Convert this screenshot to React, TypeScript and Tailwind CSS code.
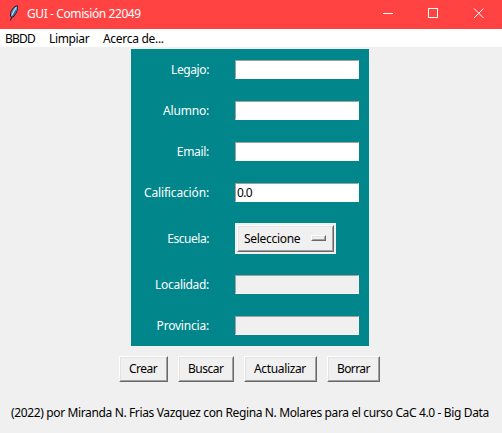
import type { ReactNode } from 'react';

const raised =
  'border border-t-white border-l-white border-r-[#696969] border-b-[#696969]';
const raisedInner =
  'flex h-full w-full items-center border border-t-[#e3e3e3] border-l-[#e3e3e3] border-r-[#a0a0a0] border-b-[#a0a0a0]';

function Row({ label, tracking, children, tall = false }: { label: string; tracking: string; children: ReactNode; tall?: boolean }) {
  return (
    <div className={`flex items-center ${tall ? 'h-[51px]' : 'h-[41px]'}`}>
      <div className="flex w-[104px] justify-end pr-[26px]">
        <span className={`text-white ${tracking}`}>{label}</span>
      </div>
      {children}
    </div>
  );
}

function Entry({ value = '', disabled = false }: { value?: string; disabled?: boolean }) {
  return (
    <div
      className={`flex h-[19px] w-[124px] items-center border border-t-[#a0a0a0] border-l-[#a0a0a0] border-r-white border-b-white pl-px tracking-[-0.7px] ${disabled ? 'bg-[#f0f0f0]' : 'bg-white'}`}
    >
      {value}
    </div>
  );
}

function Button({ label, width, tracking }: { label: string; width: string; tracking: string }) {
  return (
    <button className={`h-[26px] ${width} ${raised}`}>
      <span className={`${raisedInner} pl-2 ${tracking}`}>{label}</span>
    </button>
  );
}

function Feather() {
  return (
    <svg width="16" height="16" viewBox="0 0 16 16">
      <path d="M4 15.5L5 12.5L4 10.5L4.4 7L6 4L9.3 0.8L12 0.6L12 4L10.6 8L8.2 11.5L5.8 13L5 15.5Z" fill="#14141c" />
      <path d="M5 10.8L5.2 7.3L7 4.1L9.7 1.6L11.3 1.3L11.3 4L9.9 7.8L7.8 10.8L5.7 12Z" fill="#5b92c8" />
      <path d="M10.3 2.2L7.6 6.5L5.8 10.6" stroke="#b5dcf5" strokeWidth="1.1" fill="none" />
      <path d="M10 5.5L7.8 9.6L5.4 12.6" stroke="#24344e" strokeWidth=".6" fill="none" />
    </svg>
  );
}

export default function App() {
  return (
    <div className="h-[433px] w-[502px] overflow-hidden whitespace-nowrap bg-[#f0f0f0] font-['Noto_Sans','Open_Sans',sans-serif] text-[12px] leading-4 text-black">
      <header className="flex h-[29px] items-center bg-[#ff4343] text-white">
        <div className="w-[27px] pb-1 pl-1.5">
          <Feather />
        </div>
        <span className="flex-1 pb-px tracking-[-0.4px]">GUI - Comisión 22049</span>
        <svg width="136" height="29" viewBox="366 0 136 29" fill="none" stroke="#fff" shapeRendering="crispEdges">
          <path d="M383 13.5h10M428.5 8.5h9v9h-9z" />
          <path d="M474 8.5l9.5 9.5M483.5 8.5L474 18" shapeRendering="auto" />
        </svg>
      </header>
      <nav className="flex h-[18px] items-center bg-white pl-[5px] pt-0.5">
        <span className="w-11 tracking-[-0.8px]">BBDD</span>
        <span className="w-[54px] tracking-[-0.35px]">Limpiar</span>
        <span className="tracking-[-0.3px]">Acerca de...</span>
      </nav>
      <main className="ml-[131px] mt-0.5 h-[297px] w-[238px] bg-[#00868b]">
        <Row label="Legajo:" tracking="tracking-[-0.4px]"><Entry /></Row>
        <Row label="Alumno:" tracking="tracking-[-0.2px]"><Entry /></Row>
        <Row label="Email:" tracking="tracking-[-0.3px]"><Entry /></Row>
        <Row label="Calificación:" tracking="tracking-[-0.15px]"><Entry value="0.0" /></Row>
        <Row label="Escuela:" tracking="tracking-[-0.45px]" tall>
          <div className="h-[31px] w-[101px] bg-[#f0f0f0] p-0.5">
            <div className={`h-full w-full ${raised}`}>
              <div className={`${raisedInner} justify-between pl-[5px] pr-1.5`}>
                <span className="tracking-[-0.3px]">Seleccione</span>
                <span className={`mb-px block h-1.5 w-[15px] ${raised}`}>
                  <span className={raisedInner} />
                </span>
              </div>
            </div>
          </div>
        </Row>
        <Row label="Localidad:" tracking="tracking-[-0.3px]"><Entry disabled /></Row>
        <Row label="Provincia:" tracking="tracking-[-0.2px]"><Entry disabled /></Row>
      </main>
      <div className="mt-2.5 flex gap-2.5 pl-[119px]">
        <Button label="Crear" width="w-[49px]" tracking="tracking-[-0.5px]" />
        <Button label="Buscar" width="w-[56px]" tracking="tracking-[-0.5px]" />
        <Button label="Actualizar" width="w-[73px]" tracking="tracking-[-0.35px]" />
        <Button label="Borrar" width="w-[53px]" tracking="tracking-[-0.6px]" />
      </div>
      <footer className="mt-[23px] pl-[11px] tracking-[-0.365px]">
        (2022) por Miranda N. Frias Vazquez con Regina N. Molares para el curso CaC 4.0 - Big Data
      </footer>
    </div>
  );
}
